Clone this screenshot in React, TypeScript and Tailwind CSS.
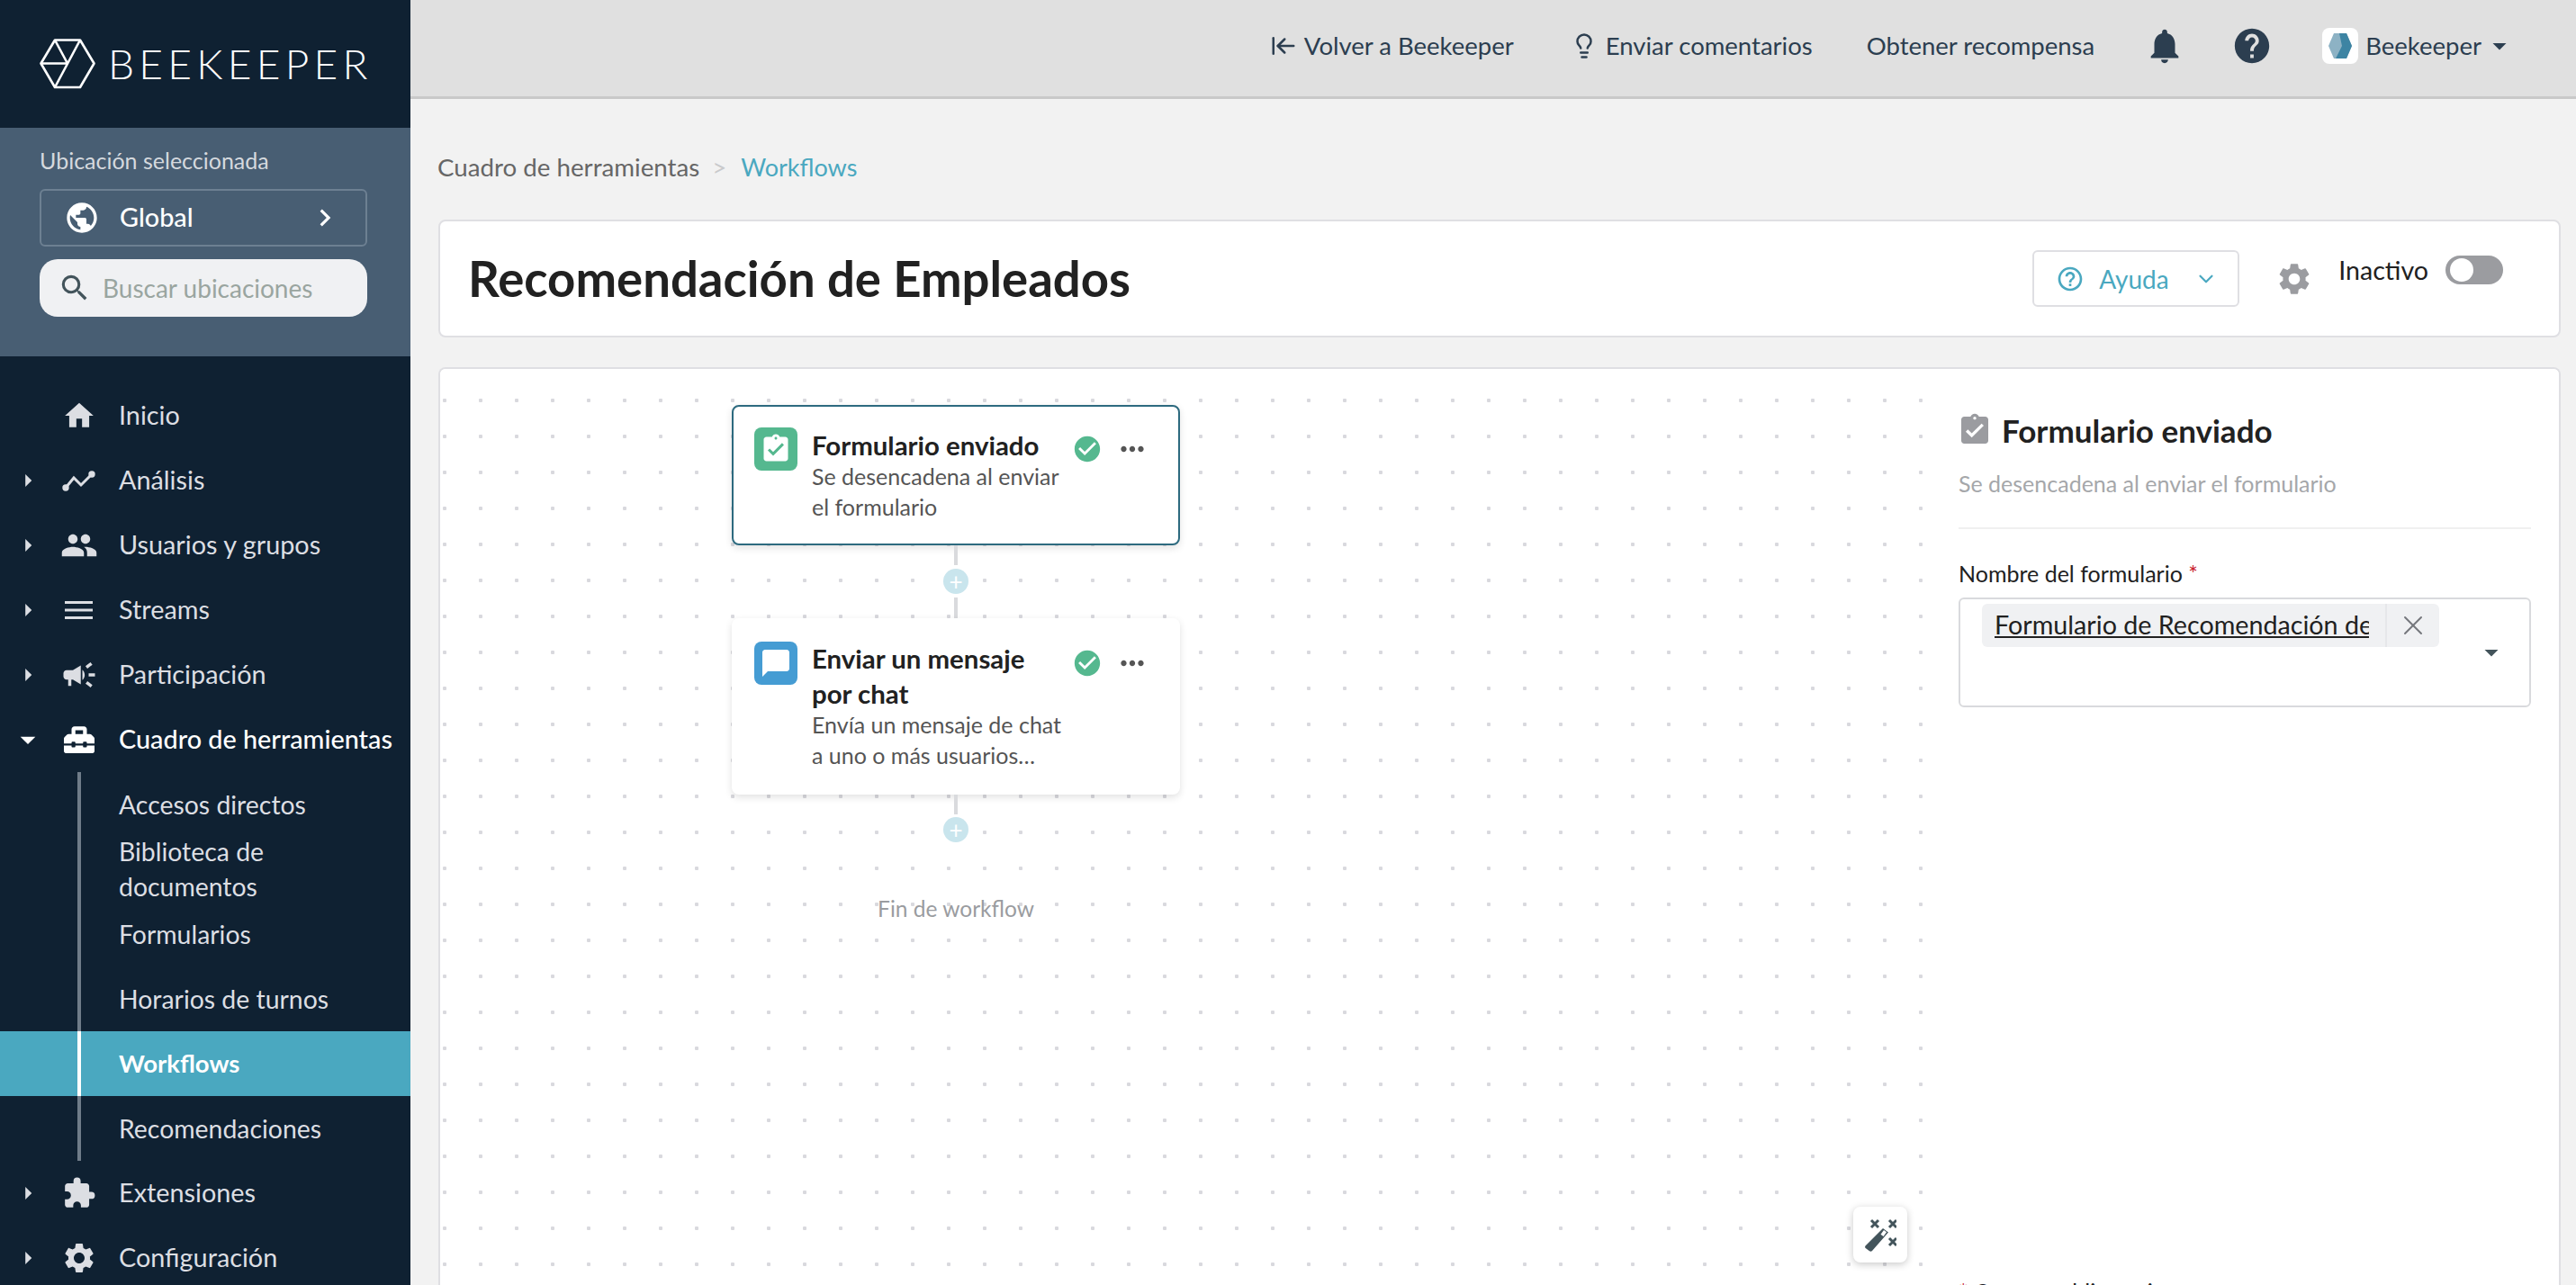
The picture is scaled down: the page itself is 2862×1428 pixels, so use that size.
import React from 'react';
import { ArrowLeftToLine, ChevronDown, Lightbulb, X } from 'lucide-react';
import {
  MdArrowDropDown,
  MdArrowRight,
  MdAssignmentTurnedIn,
  MdCampaign,
  MdCheckCircle,
  MdChevronRight,
  MdExtension,
  MdHelp,
  MdHelpOutline,
  MdHome,
  MdMoreHoriz,
  MdNotifications,
  MdPeople,
  MdPublic,
  MdSearch,
  MdSettings,
  MdChatBubble,
} from 'react-icons/md';
import { FaToolbox } from 'react-icons/fa';

const font = "font-['Lato','Noto_Sans',sans-serif]";

const LogoMark = () => (
  <svg width="62" height="56" viewBox="0 0 62 56" fill="none" stroke="white" strokeWidth="2.6" strokeLinejoin="round">
    <path d="M1.5 27.5 17 1.5h28l15.500 26L45 54H17z" />
    <path d="M45 1.500 17 54M17 1.500 31 27.500H1.500" />
  </svg>
);

const ChartIcon = () => (
  <svg width="38" height="24" viewBox="0 0 38 24" fill="none" stroke="currentColor" strokeWidth="3" strokeLinecap="round">
    <path d="M4 20 13 9l8 8L33 5" />
    <circle cx="4" cy="20" r="2.200" fill="currentColor" />
    <circle cx="33" cy="5" r="2.200" fill="currentColor" />
  </svg>
);

const StreamsIcon = () => (
  <svg width="32" height="22" viewBox="0 0 32 22" fill="currentColor">
    <rect y="1" width="31" height="3" />
    <rect y="9.500" width="31" height="3" />
    <rect y="18" width="31" height="3" />
  </svg>
);

const WandIcon = () => (
  <svg width="36" height="38" viewBox="0 0 36 38" fill="#43545b">
    <path d="M21 12l6 4.500L9 37c-.8 1-2 1-3 .3l-4-3c-1-.7-1.200-1.800-.5-2.800z" />
    <path d="M22 14l3 2.300-3.500 4.700-3-2.300z" fill="white" />
    <path d="M8 3l8 8M16 3l-8 8M28 3l8 8M36 3l-8 8M28 23l8 8M36 23l-8 8" stroke="#43545b" strokeWidth="3" fill="none" />
  </svg>
);

const navTop = [
  { label: 'Inicio', icon: <MdHome size={38} /> },
  { label: 'Análisis', icon: <ChartIcon />, caret: true },
  { label: 'Usuarios y grupos', icon: <MdPeople size={42} />, caret: true },
  { label: 'Streams', icon: <StreamsIcon />, caret: true },
  { label: 'Participación', icon: <MdCampaign size={42} />, caret: true },
];

const NavRow = ({ label, icon, caret }: { label: string; icon: React.ReactNode; caret?: boolean }) => (
  <div className="flex h-[72px] items-center text-[#dcdee3]">
    <div className="flex w-[62px] justify-center">{caret && <MdArrowRight size={34} />}</div>
    <div className="flex w-[52px] justify-center">{icon}</div>
    <span className="ml-[18px]">{label}</span>
  </div>
);

const SubRow = ({ children, active, tall }: { children: React.ReactNode; active?: boolean; tall?: boolean }) => (
  <div className={`flex h-[72px] items-center pl-[132px] ${tall ? 'leading-[39px]' : ''} ${active ? 'bg-[#4aa8c0] text-[27.500px] font-bold text-white' : 'text-[28.400px] text-[#dcdee3]'}`}>
    <span>{children}</span>
  </div>
);

const Sidebar = () => (
  <aside className="flex h-full w-[456px] shrink-0 flex-col overflow-hidden bg-[#0f2132] text-[28.800px]">
    <div className="flex h-[142px] shrink-0 items-center gap-[14px] pl-[44px]">
      <LogoMark />
      <span className="text-[46px] leading-none font-light tracking-[0.115em] text-white">BEEKEEPER</span>
    </div>
    <div className="flex h-[254px] shrink-0 flex-col bg-[#485e73] pt-[22px] pr-[48px] pl-[44px]">
      <div className="text-[25px] leading-[28px] text-[#d5d9de]">Ubicación seleccionada</div>
      <div className="mt-[18px] flex h-[64px] items-center rounded-md border-2 border-[#6d8092] pr-[26px] pl-[25px] text-white">
        <MdPublic size={40} />
        <span className="ml-[22px] flex-1 font-medium">Global</span>
        <MdChevronRight size={38} />
      </div>
      <div className="mt-[14px] flex h-[64px] items-center rounded-[20px] bg-[#f0f1f3] pl-[20px]">
        <MdSearch size={38} className="text-[#43545b]" />
        <span className="ml-[12px] text-[28px] text-[#9aa5a0]">Buscar ubicaciones</span>
      </div>
    </div>
    <nav className="pt-[30px]">
      {navTop.map((n) => (
        <NavRow key={n.label} {...n} />
      ))}
      <div className="flex h-[72px] items-center font-medium text-white">
        <div className="flex w-[62px] justify-center"><MdArrowDropDown size={40} /></div>
        <div className="flex w-[52px] justify-center"><FaToolbox size={34} /></div>
        <span className="ml-[18px]">Cuadro de herramientas</span>
      </div>
      <div className="relative">
        <div className="absolute top-0 bottom-0 left-[86px] z-10 w-[4px] bg-[#6f7c89]" />
        <div className="absolute top-[288px] left-[86px] z-10 h-[72px] w-[4px] bg-white" />
        <SubRow>Accesos directos</SubRow>
        <SubRow tall>Biblioteca de<br />documentos</SubRow>
        <SubRow>Formularios</SubRow>
        <SubRow>Horarios de turnos</SubRow>
        <SubRow active>Workflows</SubRow>
        <SubRow>Recomendaciones</SubRow>
      </div>
      <NavRow label="Extensiones" icon={<MdExtension size={38} />} caret />
      <NavRow label="Configuración" icon={<MdSettings size={40} />} caret />
    </nav>
  </aside>
);

const TopBar = () => (
  <header className="flex h-[110px] shrink-0 items-center justify-end border-b-[3px] border-[#c9c9c9] bg-[#e0e0e0] pr-[75px] pb-[6px] text-[27.500px] text-[#2c3e50]">
    <ArrowLeftToLine size={30} className="mr-[8px]" />
    <span>Volver a Beekeeper</span>
    <Lightbulb size={30} className="mr-[9px] ml-[63px]" />
    <span>Enviar comentarios</span>
    <span className="ml-[60px]">Obtener recompensa</span>
    <MdNotifications size={46} className="ml-[55px]" />
    <MdHelp size={46} className="ml-[51px]" />
    <div className="ml-[55px] flex h-[40px] w-[40px] items-center justify-center rounded-lg bg-white">
      <svg width="28" height="32" viewBox="0 0 28 32">
        <path d="M7 2h14l6 14-6 14H7L1 16z" fill="#8db2c4" />
        <path d="M13 2h8l6 14-6 14H9l7-14z" fill="#3d84a3" />
      </svg>
    </div>
    <span className="ml-[8px]">Beekeeper</span>
    <MdArrowDropDown size={36} className="ml-[2px] -mr-[8px]" />
  </header>
);

const PlusDot = () => (
  <div className="flex h-[28px] w-[28px] items-center justify-center rounded-full bg-[#c9e5ed] text-[26px] leading-none text-white">+</div>
);

const NodeCard = ({ icon, iconBg, title, desc, selected }: { icon: React.ReactNode; iconBg: string; title: React.ReactNode; desc: React.ReactNode; selected?: boolean }) => (
  <div className={`flex w-[498px] shrink-0 items-start rounded-lg bg-white shadow-[0_3px_8px_rgba(0,0,0,0.12)] ${selected ? 'h-[156px] border-2 border-[#2d6a7f] pt-[23px] pl-[23px]' : 'h-[196px] pt-[26px] pl-[25px]'}`}>
    <div className={`flex h-[48px] w-[48px] shrink-0 items-center justify-center rounded-lg ${iconBg}`}>{icon}</div>
    <div className={`ml-[16px] w-[289px] shrink-0 ${selected ? '' : '-mt-[1px]'}`}>
      <div className="text-[29.400px] leading-[39px] font-bold text-[#212121]">{title}</div>
      <div className="-mt-[2px] text-[25px] leading-[34px] text-[#555555]">{desc}</div>
    </div>
    <MdCheckCircle size={34} className="mt-[7px] shrink-0 text-[#55b88f]" />
    <MdMoreHoriz size={38} className="mt-[5px] ml-[14px] shrink-0 text-[#555555]" />
  </div>
);

const Canvas = () => (
  <div className="relative flex-1 bg-white bg-[radial-gradient(circle,#d9d9de_2px,transparent_2.500px)] bg-[length:40px_40px] bg-[position:-15px_15px]">
    <div className="ml-[324px] flex w-[498px] flex-col items-center pt-[40px]">
      <NodeCard
        selected
        iconBg="bg-[#55b88f]"
        icon={<MdAssignmentTurnedIn size={36} className="text-white" />}
        title="Formulario enviado"
        desc={<>Se desencadena al enviar<br />el formulario</>}
      />
      <div className="h-[22px] w-[4px] bg-[#d9dadd]" />
      <div className="my-[4px]"><PlusDot /></div>
      <div className="h-[23px] w-[4px] bg-[#d9dadd]" />
      <NodeCard
        iconBg="bg-[#459cd3]"
        icon={<MdChatBubble size={36} className="text-white" />}
        title={<>Enviar un mensaje<br />por chat</>}
        desc={<>Envía un mensaje de chat<br />a uno o más usuarios…</>}
      />
      <div className="h-[22px] w-[4px] bg-[#d9dadd]" />
      <div className="mt-[3px]"><PlusDot /></div>
      <div className="mt-[57px] text-[24.500px] leading-[34px] text-[#9a9ca0]">Fin de workflow</div>
    </div>
    <div className="absolute top-[931px] right-[24px] flex h-[62px] w-[60px] items-center justify-center rounded-lg bg-white shadow-[0_2px_8px_rgba(0,0,0,0.22)]">
      <WandIcon />
    </div>
  </div>
);

const DetailPanel = () => (
  <div className="w-[700px] shrink-0 overflow-hidden bg-white pt-[48px] pr-[31px] pl-[33px] shadow-[-2px_0_6px_rgba(0,0,0,0.08)]">
    <div className="flex items-center gap-[10px]">
      <MdAssignmentTurnedIn size={40} className="-ml-[2px] text-[#9b9ca0]" />
      <span className="text-[35px] leading-[40px] font-bold text-[#212121]">Formulario enviado</span>
    </div>
    <div className="mt-[22px] border-b-2 border-[#f0f0f0] pb-[32px] text-[25px] leading-[34px] text-[#a5a7aa]">Se desencadena al enviar el formulario</div>
    <div className="mt-[32px] text-[25px] leading-[34px] text-[#212121]">
      Nombre del formulario <span className="text-[#c9202c]">*</span>
    </div>
    <div className="mt-[10px] flex h-[122px] items-start rounded-md border-2 border-[#d9dadd] pt-[5px] pl-[24px]">
      <div className="flex h-[48px] w-[508px] items-center rounded-md bg-[#f0f1f3]">
        <span className="ml-[14px] w-[416px] overflow-hidden text-[28.700px] whitespace-nowrap text-[#212121] underline">Formulario de Recomendación de Empleados</span>
        <div className="ml-[18px] flex h-full w-[60px] items-center justify-center border-l-2 border-[#e6e7ea]">
          <X size={36} strokeWidth={1.300} className="text-[#75777c]" />
        </div>
      </div>
      <MdArrowDropDown size={36} className="mt-[36px] ml-[40px] text-[#43545b]" />
    </div>
    <div className="mt-[632px] text-[25px] leading-[34px] text-[#212121]">
      <span className="text-[#c9202c]">*</span> Campos obligatorios
    </div>
  </div>
);

export default function App() {
  return (
    <div className={`flex h-screen w-full overflow-hidden bg-[#f2f2f2] ${font}`}>
      <Sidebar />
      <main className="flex min-w-0 flex-1 flex-col">
        <TopBar />
        <div className="flex min-h-0 flex-1 flex-col pr-[17px] pl-[31px]">
          <div className="mt-[59px] flex items-center text-[27.700px] leading-[34px]">
            <span className="-ml-[1px] text-[#666666]">Cuadro de herramientas</span>
            <span className="mx-[14px] text-[#c9cacc]">&gt;</span>
            <span className="ml-[2px] text-[27px] text-[#4aa8c0]">Workflows</span>
          </div>
          <div className="mt-[41px] flex h-[131px] shrink-0 items-center rounded-lg border-2 border-[#dfdfe3] bg-white pr-[64px] pl-[31px]">
            <h1 className="flex-1 text-[54.500px] font-bold text-[#212121]">Recomendación de Empleados</h1>
            <div className="flex h-[63px] w-[230px] items-center rounded-md border-2 border-[#dfdfe3] pl-[24px] text-[28px] text-[#4aa8c0]">
              <MdHelpOutline size={32} />
              <span className="ml-[16px] flex-1">Ayuda</span>
              <ChevronDown size={26} className="mr-[22px]" />
            </div>
            <MdSettings size={42} className="ml-[40px] text-[#9b9ca0]" />
            <div className="mb-[18px] ml-[28px] flex items-center">
              <span className="text-[28.600px] text-[#212121]">Inactivo</span>
              <div className="-mr-[2px] ml-[19px] flex h-[32px] w-[64px] items-center rounded-full bg-[#9b9ca0] pl-[5px]">
                <div className="h-[26px] w-[26px] rounded-full bg-white" />
              </div>
            </div>
          </div>
          <div className="mt-[33px] flex min-h-0 flex-1 overflow-hidden rounded-t-lg border-x-2 border-t-2 border-[#dfdfe3] bg-white">
            <Canvas />
            <DetailPanel />
          </div>
        </div>
      </main>
    </div>
  );
}
